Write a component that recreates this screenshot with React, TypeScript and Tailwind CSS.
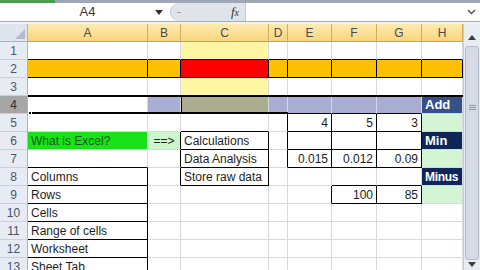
import React from "react";

type Cell = {
  text?: string;
  bg?: string;
  align?: "left" | "right" | "center";
  cls?: string;
};

const LETTERS = ["A", "B", "C", "D", "E", "F", "G", "H"];

// row -> col(1..8) -> cell
const SHEET: Record<number, Record<number, Cell>> = {
  1: { 3: { bg: "bg-[#fff6a3]" } },
  2: {
    1: { bg: "bg-[#ffc000]" },
    2: { bg: "bg-[#ffc000]" },
    3: { bg: "bg-[#ff0000]" },
    4: { bg: "bg-[#ffc000]" },
    5: { bg: "bg-[#ffc000]" },
    6: { bg: "bg-[#ffc000]" },
    7: { bg: "bg-[#ffc000]" },
    8: { bg: "bg-[#ffc000]" },
  },
  3: { 3: { bg: "bg-[#fff6a3]" } },
  4: {
    2: { bg: "bg-[#a9aed4]" },
    3: { bg: "bg-[#abad8e]" },
    4: { bg: "bg-[#a9add1]" },
    5: { bg: "bg-[#a9add1]" },
    6: { bg: "bg-[#a9add1]" },
    7: { bg: "bg-[#a9add1]" },
    8: { text: "Add", bg: "bg-[#35508a]", cls: "text-white font-bold text-[13px]" },
  },
  5: {
    5: { text: "4", align: "right" },
    6: { text: "5", align: "right" },
    7: { text: "3", align: "right" },
    8: { bg: "bg-[#d3f5d3]" },
  },
  6: {
    1: { text: "What is Excel?", bg: "bg-[#19e219]", cls: "text-[#0b5a0b]" },
    2: { text: "==>", bg: "bg-[#ccf7cc]", align: "center" },
    3: { text: "Calculations" },
    8: { text: "Min", bg: "bg-[#0e2658]", cls: "text-white font-bold text-[13px]" },
  },
  7: {
    3: { text: "Data Analysis" },
    5: { text: "0.015", align: "right" },
    6: { text: "0.012", align: "right" },
    7: { text: "0.09", align: "right" },
    8: { bg: "bg-[#d3f5d3]" },
  },
  8: {
    1: { text: "Columns" },
    3: { text: "Store raw data" },
    8: { text: "Minus", bg: "bg-[#0e2658]", cls: "text-white font-bold text-[12px] tracking-[-0.3px]" },
  },
  9: {
    1: { text: "Rows" },
    6: { text: "100", align: "right" },
    7: { text: "85", align: "right" },
    8: { bg: "bg-[#d3f5d3]" },
  },
  10: { 1: { text: "Cells" } },
  11: { 1: { text: "Range of cells" } },
  12: { 1: { text: "Worksheet" } },
  13: { 1: { text: "Sheet Tab" } },
};

const boxed = (r: number, c: number) => {
  if (r === 2 && c >= 1 && c <= 8) return true;
  if (r >= 6 && r <= 8 && c === 3) return true;
  if (r >= 5 && r <= 7 && c >= 5 && c <= 7) return true;
  if (r === 9 && (c === 6 || c === 7)) return true;
  if (r >= 8 && r <= 13 && c === 1) return true;
  return false;
};

const SheetCell = ({ r, c }: { r: number; c: number }) => {
  const cell = SHEET[r]?.[c] ?? {};
  const right = boxed(r, c) || boxed(r, c + 1);
  const bottom = boxed(r, c) || boxed(r + 1, c);
  const align =
    cell.align === "right"
      ? "justify-end pr-[3px]"
      : cell.align === "center"
        ? "justify-center"
        : "justify-start pl-[3px]";
  return (
    <div
      className={`flex items-center overflow-visible whitespace-nowrap border-r border-b ${
        right ? "border-r-black" : "border-r-[#d6d9df]"
      } ${bottom ? "border-b-black" : "border-b-[#d6d9df]"} ${
        cell.bg ?? "bg-white"
      } ${align} ${cell.cls ?? "text-[#1e1e1e]"}`}
    >
      {cell.text}
    </div>
  );
};

const RowHeader = ({ r }: { r: number }) => (
  <div
    className={`flex items-center justify-center border-r border-b border-r-[#9eb6ce] border-b-[#c5d1de] text-[12px] ${
      r === 4 ? "bg-[#a6a6a6] text-[#2e2e2e]" : "bg-[#e7ecf4] text-[#4a5566]"
    }`}
  >
    {r}
  </div>
);

export default function App() {
  const rows = Array.from({ length: 13 }, (_, i) => i + 1);
  return (
    <div className="w-[480px] h-[270px] overflow-hidden bg-white font-['Liberation_Sans',Arial,sans-serif] text-[12px] flex flex-col">
      {/* ribbon edge */}
      <div className="h-[3px] flex bg-[#9ea7b3]">
        <div className="w-[55px] bg-[#4c9a4c]" />
      </div>

      {/* formula bar */}
      <div className="h-[19px] flex border-b border-[#a5acb8] bg-white">
        <div className="w-[170px] flex items-center">
          <span className="flex-1 text-center text-[13px] text-[#333] pl-[20px]">A4</span>
          <svg width="8" height="5" viewBox="0 0 8 5" className="mr-[7px]">
            <path d="M0 0 L8 0 L4 5 Z" fill="#333" />
          </svg>
        </div>
        <div className="w-[75px] flex items-center bg-[#dfe3ea] rounded-l-[10px] border-l border-[#c3c9d3]">
          <span className="ml-[6px] w-[4px] h-[1px] bg-[#9aa1ab]" />
          <span className="ml-auto mr-[6px] italic font-['Liberation_Serif',serif] text-[13px] text-[#333]">
            f<span className="text-[10px]">x</span>
          </span>
        </div>
        <div className="flex-1 border-l border-[#c3c9d3]" />
        <div className="w-[17px] flex items-center justify-center">
          <svg width="9" height="6" viewBox="0 0 9 6">
            <path d="M1 1 L4.5 4.5 L8 1" stroke="#555" strokeWidth="1.5" fill="none" />
          </svg>
        </div>
      </div>
      <div className="h-[2px] bg-[#eef1f5]" />

      <div className="flex flex-1 min-h-0">
        {/* grid */}
        <div className="relative w-[463px] grid grid-cols-[28px_120px_33px_88px_19px_44px_45px_45px_41px] auto-rows-[18px] content-start">
          {/* header row */}
          <div className="bg-[#dfe5ee] border-r border-b border-r-[#9eb6ce] border-b-[#9eb6ce] flex items-end justify-end p-[2px]">
            <svg width="10" height="10" viewBox="0 0 10 10">
              <path d="M10 0 L10 10 L0 10 Z" fill="#b4bcc8" />
            </svg>
          </div>
          {LETTERS.map((l) => (
            <div
              key={l}
              className="flex items-center justify-center bg-gradient-to-b from-[#fdebb1] to-[#f8d57c] border-r border-b border-r-[#d5ac5f] border-b-[#c9a055] text-[#4b4b4b] text-[12px]"
            >
              {l}
            </div>
          ))}

          {rows.map((r) => (
            <React.Fragment key={r}>
              <RowHeader r={r} />
              {LETTERS.map((_, i) => (
                <SheetCell key={i} r={r} c={i + 1} />
              ))}
            </React.Fragment>
          ))}

          {/* selection border around row 4 */}
          <div className="absolute left-[28px] top-[71px] w-[435px] h-[2px] bg-black" />
          <div className="absolute left-[28px] top-[88px] w-[260px] h-[2px] bg-black" />
          <div className="absolute left-[28px] top-[87px] w-[4px] h-[4px] bg-black border border-white" />
          <div className="absolute left-[181px] top-[73px] w-[1px] h-[15px] bg-black" />
        </div>

        {/* vertical scrollbar */}
        <div className="w-[17px] flex flex-col bg-[#e9ecf2] border-l border-[#c8ccd6]">
          <div className="h-[22px] flex items-center justify-center pt-[4px]">
            <svg width="8" height="5" viewBox="0 0 8 5">
              <path d="M0 5 L8 5 L4 0 Z" fill="#3c3c3c" />
            </svg>
          </div>
          <div className="flex-1 mx-[1px] mb-[2px] rounded-[3px] bg-[#d6dae6] border border-[#b3b9c9] flex flex-col items-center pt-[58px]">
            <div className="w-[7px] h-[1px] bg-[#8e95a6] mb-[1px]" />
            <div className="w-[7px] h-[1px] bg-[#8e95a6] mb-[1px]" />
            <div className="w-[7px] h-[1px] bg-[#8e95a6]" />
          </div>
          <div className="h-[8px] flex items-start justify-center">
            <svg width="8" height="5" viewBox="0 0 8 5">
              <path d="M0 0 L8 0 L4 5 Z" fill="#3c3c3c" />
            </svg>
          </div>
        </div>
      </div>
    </div>
  );
}
